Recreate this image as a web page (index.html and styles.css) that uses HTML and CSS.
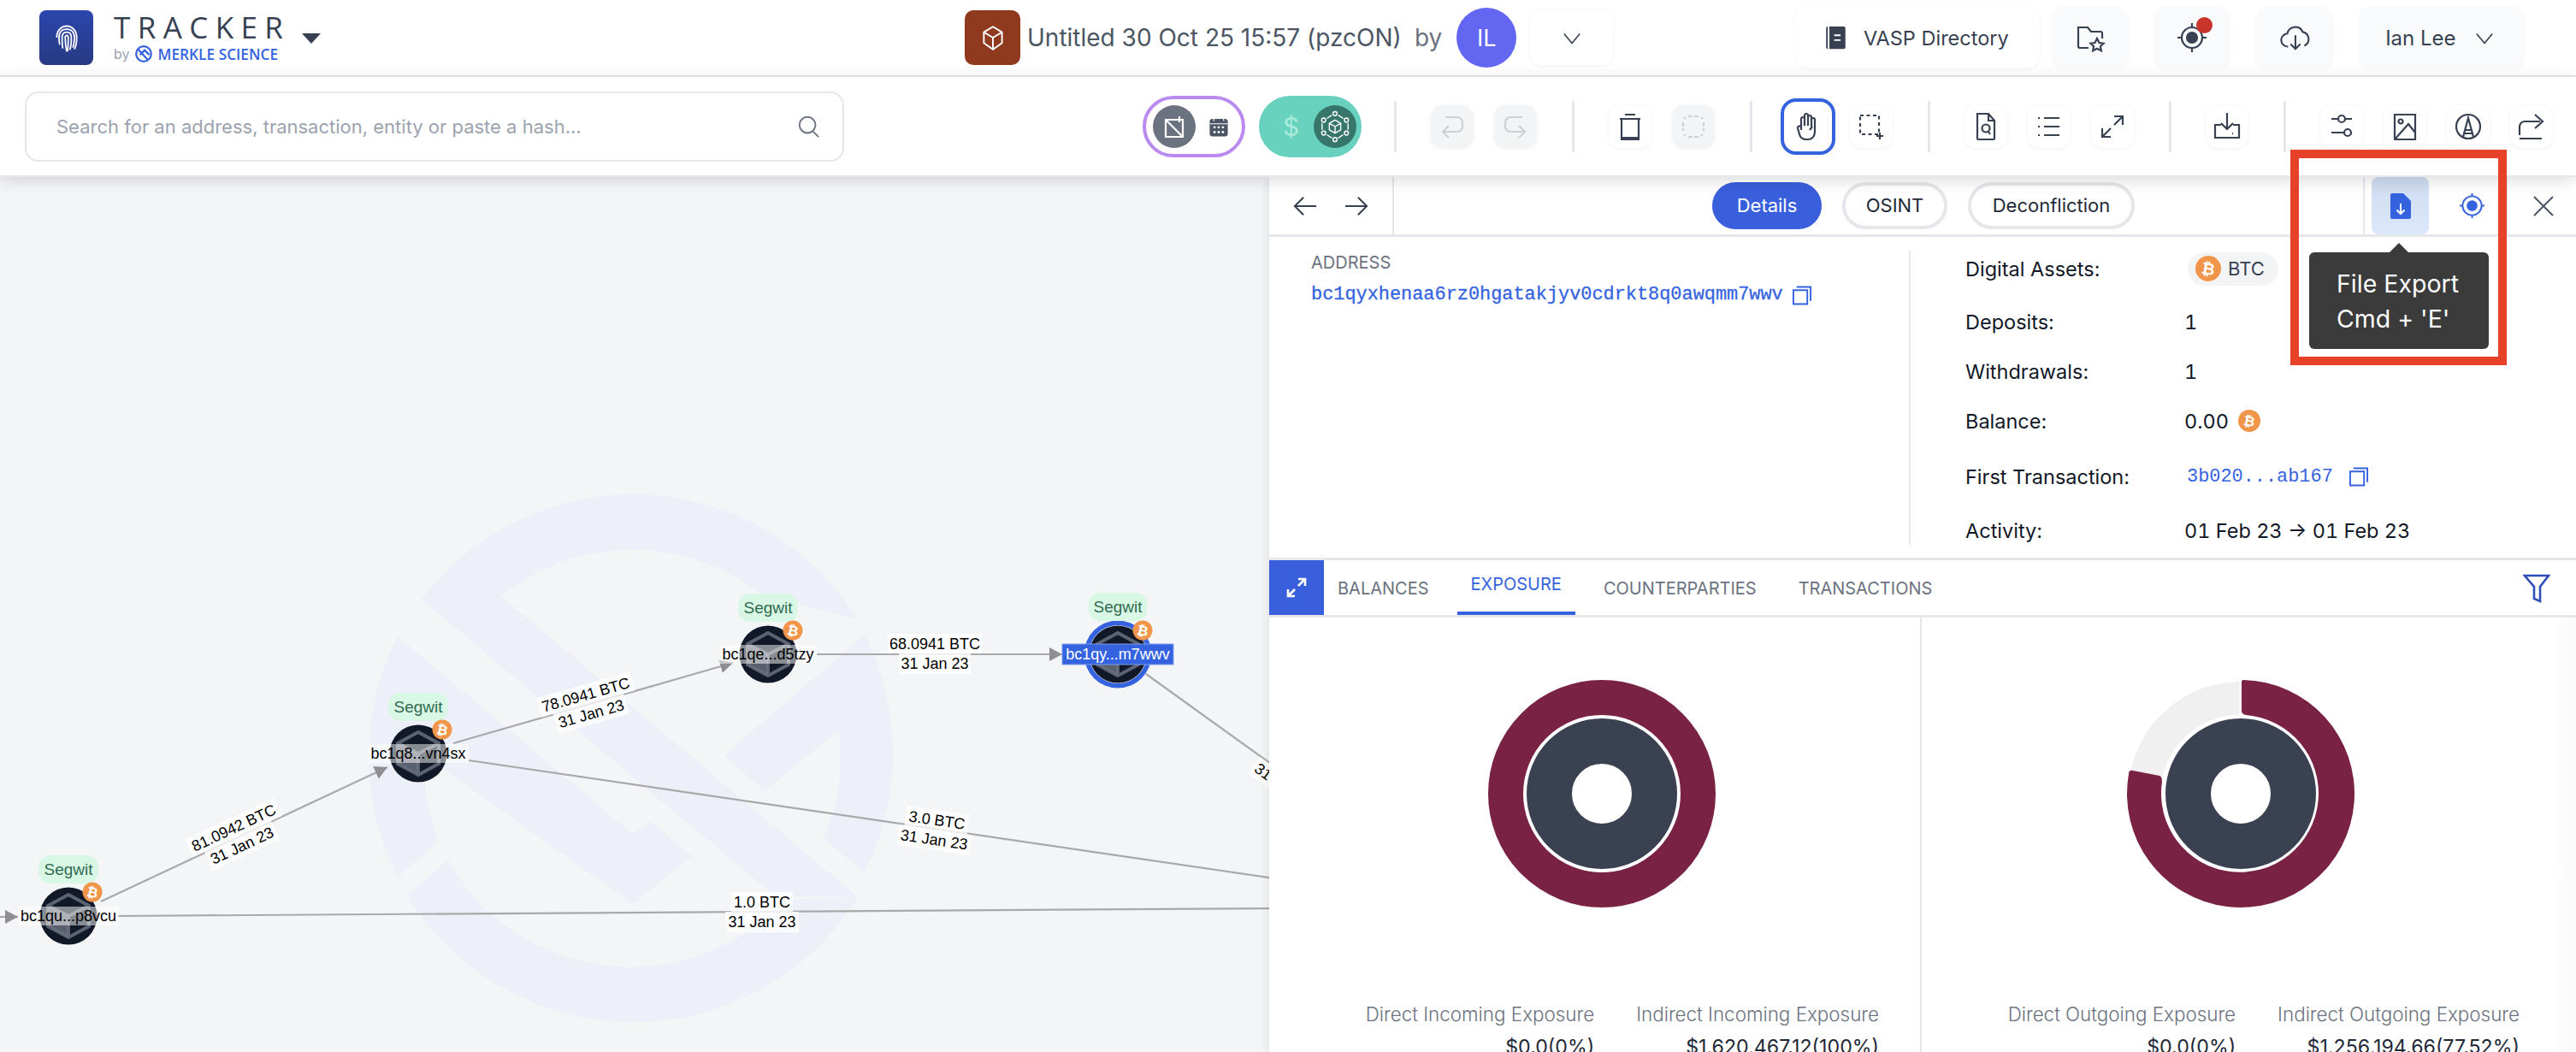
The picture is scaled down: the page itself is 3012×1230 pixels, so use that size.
FILE: index.html
```html
<!DOCTYPE html>
<html lang="en">
<head>
  <meta charset="UTF-8">
  <title>Tracker</title>
  <link rel="stylesheet" href="styles.css">
</head>
<body>

<div class="page">
  <!-- TOP BAR -->
  <header class="topbar">
    <div class="logo">
      <svg viewBox="0 0 40 44" class="logo-print">
        <path d="M7 22C7 13 13 7 20 7s13 6 13 15c0 7-1 11-3 15"/>
        <path d="M11 31c-1-3-1-6-1-9 0-7 4-11 10-11s10 4 10 11c0 5-1 10-2 13"/>
        <path d="M15 36c-1-4-1-9-1-14 0-4 2-7 6-7s6 3 6 7c0 6 0 11-2 16"/>
        <path d="M20 40c-1-5-2-11-2-18 0-2 1-3 2-3s2 1 2 3c0 6 0 12-1 18"/>
      </svg>
    </div>
    <div class="brand">
      <div class="brand-name">TRACKER</div>
      <div class="brand-by">
        <span>by</span>
        <svg viewBox="0 0 20 20" class="brand-mark"><circle cx="10" cy="10" r="8"/><path d="M4 5l10 11M6 11l5-5 5 5"/></svg>
        <b>MERKLE SCIENCE</b>
      </div>
    </div>
    <div class="brand-caret"></div>

    <div class="graph-icon">
      <svg viewBox="0 0 32 32" class="ico ico-white"><path d="M16 4l10 6v12l-10 7-10-7V10zM6 10l10 6 10-6M16 16v13"/></svg>
    </div>
    <div class="graph-title">Untitled 30 Oct 25 15:57 (pzcON)</div>
    <div class="graph-by">by</div>
    <div class="avatar">IL</div>
    <button class="chevron-btn"><svg viewBox="0 0 24 24" class="chev"><path d="M2 7l10 12L22 7"/></svg></button>

    <button class="top-btn vasp-btn">
      <svg viewBox="0 0 24 32" class="vasp-ico"><rect x="0" y="2" width="24" height="28" rx="2"/><path d="M3 2v28" class="vasp-gap"/><path d="M10 13h8M10 19h8" class="vasp-gap"/></svg>
      VASP Directory
    </button>
    <button class="top-btn top-square folder-btn">
      <svg viewBox="0 0 36 36" class="ico ico-top"><path d="M16 30H6a2 2 0 0 1-2-2V6h11l4 5h11a2 2 0 0 1 2 2v6"/><path d="M26 19l2.500 5 5 .7-3.600 3.500.9 5-4.800-2.500-4.800 2.500.9-5-3.600-3.500 5-.7z"/></svg>
    </button>
    <button class="top-btn top-square target-btn">
      <svg viewBox="0 0 36 36" class="ico ico-top"><circle cx="18" cy="18" r="12"/><circle cx="18" cy="18" r="6" class="fill-dark"/><path d="M18 1v5M18 30v5M1 18h5M30 18h5"/></svg>
      <span class="alert-dot"></span>
    </button>
    <button class="top-btn top-square cloud-btn">
      <svg viewBox="0 0 38 36" class="ico ico-top"><path d="M11 29a8 8 0 0 1-1-16 10 10 0 0 1 19-2 9 9 0 0 1 2 17"/><path d="M20 15v17M14 26l6 6 6-6"/></svg>
    </button>
    <button class="top-btn user-btn">Ian Lee <svg viewBox="0 0 24 24" class="chev"><path d="M2 7l10 12L22 7"/></svg></button>
  </header>

  <!-- TOOLBAR -->
  <div class="toolbar">
    <div class="search">
      <span class="search-text">Search for an address, transaction, entity or paste a hash...</span>
      <svg viewBox="0 0 30 30" class="search-ico"><circle cx="13" cy="13" r="10"/><path d="M20 21l7 7"/></svg>
    </div>

    <div class="pill pill-purple">
      <span class="pill-dot pill-dot-gray">
        <svg viewBox="0 0 32 32" class="ico ico-white"><path d="M6 8h20v20H6zM22 4v7M6 8l20 20"/></svg>
      </span>
      <svg viewBox="0 0 32 32" class="pill-cal"><rect x="3" y="5" width="26" height="25" rx="4"/><path d="M9 2v6M23 2v6M3 12h26" class="cal-line"/><g class="cal-dots"><circle cx="10" cy="17" r="1.700"/><circle cx="16" cy="17" r="1.700"/><circle cx="22" cy="17" r="1.700"/><circle cx="10" cy="24" r="1.700"/><circle cx="16" cy="24" r="1.700"/><circle cx="22" cy="24" r="1.700"/></g></svg>
    </div>
    <div class="pill pill-green">
      <span class="pill-dollar">$</span>
      <span class="pill-dot pill-dot-green">
        <svg viewBox="0 0 40 40" class="ico-net"><path d="M20 12l7 4v8l-7 4-7-4v-8zM13 16l7 4 7-4M20 20v8"/><g><circle cx="20" cy="4" r="2.500"/><circle cx="34" cy="12" r="2.500"/><circle cx="34" cy="28" r="2.500"/><circle cx="20" cy="36" r="2.500"/><circle cx="6" cy="28" r="2.500"/><circle cx="6" cy="12" r="2.500"/></g><path d="M24 6l6 4M36 16v8M30 30l-6 4M16 34l-6-4M4 24v-8M10 10l6-4"/></svg>
      </span>
    </div>

    <span class="sep sep-first"></span>
    <div class="tool-group">
      <button class="tool tool-off"><svg viewBox="0 0 32 32" class="ico"><path d="M8 5h14a6 6 0 0 1 6 6v5a6 6 0 0 1-6 6H5M12 15l-7 7 7 7"/></svg></button>
      <button class="tool tool-off"><svg viewBox="0 0 32 32" class="ico"><path d="M24 5H10a6 6 0 0 0-6 6v5a6 6 0 0 0 6 6h17M20 15l7 7-7 7"/></svg></button>
    </div>
    <span class="sep"></span>
    <div class="tool-group">
      <button class="tool"><svg viewBox="0 0 32 36" class="ico ico-tall"><path d="M4 9h24M10 4h12M6 9v24h20V9M6 31h20"/></svg></button>
      <button class="tool tool-off"><svg viewBox="0 0 32 32" class="ico"><path d="M10 4h12M10 28h12M4 11v10M28 11v10M5 7l2-2M25 5l2 2M5 25l2 2M25 27l2-2" stroke-dasharray="5 2"/></svg></button>
    </div>
    <span class="sep"></span>
    <div class="tool-group">
      <button class="tool tool-hand"><svg viewBox="0 0 32 36" class="ico ico-tall"><path d="M8 22V9a2 2 0 0 1 4 0v8-12a2 2 0 0 1 4 0v12V7a2 2 0 0 1 4 0v11-8a2 2 0 0 1 4 0v14c0 5-3 9-8 9h-2c-4 0-7-2-8-6l-2-7a2 2 0 0 1 4-1z"/><path d="M18 22l3-4"/></svg></button>
      <button class="tool"><svg viewBox="0 0 32 36" class="ico ico-tall"><path d="M3 5h22v22H3z" stroke-dasharray="4 3.500"/><path d="M26 25v8M22 29h8"/></svg></button>
    </div>
    <span class="sep"></span>
    <div class="tool-group">
      <button class="tool"><svg viewBox="0 0 32 36" class="ico ico-tall"><path d="M6 3h13l7 8v21a1 1 0 0 1-1 1H7a1 1 0 0 1-1-1zM19 3v8h7"/><circle cx="16" cy="20" r="4.500"/><path d="M19 24l2 3"/></svg></button>
      <button class="tool"><svg viewBox="0 0 32 32" class="ico"><path d="M10 6h18M10 16h18M10 26h18M3 6h2M3 16h2M3 26h2"/></svg></button>
      <button class="tool"><svg viewBox="0 0 32 32" class="ico"><path d="M28 4L18 14M18 4h10v10M4 28l10-10M4 18v10h10"/></svg></button>
    </div>
    <span class="sep"></span>
    <div class="tool-group">
      <button class="tool"><svg viewBox="0 0 32 36" class="ico ico-tall"><path d="M16 2v18M9 14l7 7 7-7M9 16H2v15h28V16h-7M22 26h1"/></svg></button>
    </div>
    <span class="sep"></span>
    <div class="tool-group">
      <button class="tool"><svg viewBox="0 0 32 36" class="ico ico-tall"><path d="M4 9h8M20 9h8M4 25h16M28 25h-2"/><circle cx="16" cy="9" r="4"/><circle cx="23" cy="25" r="4"/></svg></button>
      <button class="tool"><svg viewBox="0 0 32 36" class="ico ico-tall"><path d="M4 4h24v29H4zM4 33l16-18 8 10"/><circle cx="11" cy="12" r="2.500"/></svg></button>
      <button class="tool"><svg viewBox="0 0 32 36" class="ico ico-tall"><circle cx="16" cy="18" r="14"/><path d="M10 30l6-22 6 22M12 22h8M12 26h8"/></svg></button>
      <button class="tool"><svg viewBox="0 0 32 36" class="ico ico-tall"><path d="M2 32h26M2 28V18a6 6 0 0 1 6-6h18M20 4l9 8-9 8"/></svg></button>
    </div>
  </div>

  <div class="workspace">
    <!-- GRAPH CANVAS -->
    <div class="canvas">
      <svg class="graph" viewBox="0 207 1484 1023" width="1484" height="1023">
        <defs>
          <marker id="arrow" markerUnits="userSpaceOnUse" markerWidth="16" markerHeight="16" refX="15" refY="8" orient="auto">
            <path d="M0 0L15 8 0 16z" class="arrow-head"/>
          </marker>
          <g id="cube">
            <path d="M-24 -12L0 -25 24 -12V12L0 25 -24 12z" class="cube-line"/>
            <path d="M-24 -12L0 0 24 -12M0 0V25" class="cube-line"/>
            <path d="M-24 -12L0 0V25L-24 12z" class="cube-face"/>
          </g>
          <g id="coin">
            <circle r="11.500" class="coin"/>
            <text y="6" class="coin-text" transform="rotate(12)">₿</text>
          </g>
          <circle id="disc" r="33.500" class="disc"/>
        </defs>

        <!-- watermark -->
        <g class="watermark">
          <path d="M493 701A309.500 309.500 0 0 1 1003 724L893 697A244 244 0 0 0 586 697L1003 1049 905 1047 493 701z"/>
          <path d="M465 744A309.500 309.500 0 0 0 465 1026L513 983A245 245 0 0 1 496 883L740 1057 810 1001 760 960 740 975z"/>
          <path d="M1011 742A309.500 309.500 0 0 1 1011 1020L963 981A245 245 0 0 0 981 854L894 925 847 883z"/>
          <path d="M476 1047L524 1006A245 245 0 0 0 917 1052L1003 1049A309.500 309.500 0 0 1 476 1047z"/>
        </g>

        <!-- edges -->
        <g class="edges">
          <path d="M0 1072L21 1072" marker-end="url(#arrow)"/>
          <path d="M118 1054L453 897" marker-end="url(#arrow)"/>
          <path d="M530 869L857 775" marker-end="url(#arrow)"/>
          <path d="M955 765L1242 765" marker-end="url(#arrow)"/>
          <path d="M1340 788L1490 896"/>
          <path d="M548 889L1490 1027"/>
          <path d="M138 1071L1490 1062"/>
        </g>

        <!-- edge labels -->
        <g transform="translate(278 978) rotate(-25)" class="edge-label">
          <rect x="-57" y="-23" width="114" height="23"/><text y="-5">81.0942 BTC</text>
          <rect x="-43" y="0" width="86" height="24"/><text y="18">31 Jan 23</text>
        </g>
        <g transform="translate(688 823) rotate(-16)" class="edge-label">
          <rect x="-57" y="-23" width="114" height="23"/><text y="-5">78.0941 BTC</text>
          <rect x="-43" y="0" width="86" height="24"/><text y="18">31 Jan 23</text>
        </g>
        <g transform="translate(1093 764)" class="edge-label">
          <rect x="-55" y="-23" width="110" height="23"/><text y="-5">68.0941 BTC</text>
          <rect x="-42" y="0" width="84" height="24"/><text y="18">31 Jan 23</text>
        </g>
        <g transform="translate(1094 970) rotate(8.300)" class="edge-label">
          <rect x="-37" y="-23" width="74" height="23"/><text y="-5">3.0 BTC</text>
          <rect x="-43" y="0" width="86" height="24"/><text y="18">31 Jan 23</text>
        </g>
        <g transform="translate(891 1066)" class="edge-label">
          <rect x="-36" y="-23" width="72" height="23"/><text y="-5">1.0 BTC</text>
          <rect x="-43" y="0" width="86" height="24"/><text y="18">31 Jan 23</text>
        </g>
        <g transform="translate(1508 910) rotate(36)" class="edge-label">
          <rect x="-43" y="0" width="86" height="24"/><text y="18">31 Jan 23</text>
        </g>

        <!-- nodes -->
        <g transform="translate(80 1071)">
          <use href="#disc"/><use href="#cube"/>
          <rect x="-59" y="-11" width="118" height="22" class="node-tag"/>
          <text y="6" class="node-text">bc1qu...p8vcu</text>
          <rect x="-35" y="-71" width="70" height="33" rx="14" class="chip"/>
          <text y="-48" class="chip-text">Segwit</text>
          <use href="#coin" x="28" y="-28"/>
        </g>
        <g transform="translate(489 881)">
          <use href="#disc"/><use href="#cube"/>
          <rect x="-59" y="-11" width="118" height="22" class="node-tag"/>
          <text y="6" class="node-text">bc1q8...vn4sx</text>
          <rect x="-35" y="-71" width="70" height="33" rx="14" class="chip"/>
          <text y="-48" class="chip-text">Segwit</text>
          <use href="#coin" x="28" y="-28"/>
        </g>
        <g transform="translate(898 765)">
          <use href="#disc"/><use href="#cube"/>
          <rect x="-57" y="-11" width="114" height="22" class="node-tag"/>
          <text y="6" class="node-text">bc1qe...d5tzy</text>
          <rect x="-35" y="-71" width="70" height="33" rx="14" class="chip"/>
          <text y="-48" class="chip-text">Segwit</text>
          <use href="#coin" x="29" y="-28"/>
        </g>
        <g transform="translate(1307 765)">
          <circle r="39.500" class="disc-ring"/>
          <circle r="34" class="disc-gap"/>
          <use href="#disc"/><use href="#cube"/>
          <rect x="-65" y="-12" width="130" height="24" class="node-tag-on"/>
          <text y="6" class="node-text-on">bc1qy...m7wwv</text>
          <rect x="-34.500" y="-72" width="69" height="33" rx="14" class="chip"/>
          <text y="-49" class="chip-text">Segwit</text>
          <use href="#coin" x="29" y="-28"/>
        </g>
      </svg>
    </div>

    <!-- SIDE PANEL -->
    <div class="panel">
      <div class="panel-head">
        <div class="panel-nav">
          <svg viewBox="0 0 30 26" class="ico nav-arrow"><path d="M29 13H2M13 2L2 13l11 11"/></svg>
          <svg viewBox="0 0 30 26" class="ico nav-arrow"><path d="M1 13h27M17 2l11 11-11 11"/></svg>
        </div>
        <div class="panel-tabs">
          <span class="tab-pill tab-pill-on">Details</span>
          <span class="tab-pill tab-pill-osint">OSINT</span>
          <span class="tab-pill tab-pill-decon">Deconfliction</span>
        </div>
        <div class="panel-actions">
          <span class="action action-on">
            <svg viewBox="0 0 26 32" class="action-file"><path d="M3 1h13l9 9v19a2 2 0 0 1-2 2H3a2 2 0 0 1-2-2V3a2 2 0 0 1 2-2z"/><path d="M13 13v12M8.500 20.500L13 25l4.500-4.500" class="file-arrow"/></svg>
          </span>
          <span class="action">
            <svg viewBox="0 0 32 32" class="action-target"><circle cx="16" cy="16" r="11.500"/><circle cx="16" cy="16" r="5.500" class="action-target-dot"/><path d="M16 1v4M16 27v4M1 16h4M27 16h4"/></svg>
          </span>
        </div>
        <div class="panel-close">
          <svg viewBox="0 0 24 24" class="close-x"><path d="M1 1l22 22M23 1L1 23"/></svg>
        </div>
      </div>

      <div class="details">
        <div class="details-left">
          <div class="field-label">ADDRESS</div>
          <div class="address">
            <span class="mono">bc1qyxhenaa6rz0hgatakjyv0cdrkt8q0awqmm7wwv</span>
            <svg viewBox="0 0 24 24" class="copy"><path d="M2 6h17v17H2zM6 2h17v17"/></svg>
          </div>
        </div>
        <div class="details-right">
          <div class="fact"><span class="fact-key">Digital Assets:</span>
            <span class="asset-chip"><span class="btc-coin">₿</span>BTC</span></div>
          <div class="fact"><span class="fact-key">Deposits:</span><span>1</span></div>
          <div class="fact"><span class="fact-key">Withdrawals:</span><span>1</span></div>
          <div class="fact"><span class="fact-key">Balance:</span><span>0.00</span><span class="btc-coin btc-coin-small">₿</span></div>
          <div class="fact"><span class="fact-key">First Transaction:</span>
            <span class="mono hash">3b020...ab167</span>
            <svg viewBox="0 0 24 24" class="copy"><path d="M2 6h17v17H2zM6 2h17v17"/></svg></div>
          <div class="fact"><span class="fact-key">Activity:</span><span>01 Feb 23 → 01 Feb 23</span></div>
        </div>
      </div>

      <div class="tabs">
        <span class="expand"><svg viewBox="0 0 24 24" class="expand-ico"><path d="M22 2L14 10M14 2h8v8M2 22l8-8M2 14v8h8"/></svg></span>
        <span class="tab">BALANCES</span>
        <span class="tab tab-on">EXPOSURE</span>
        <span class="tab">COUNTERPARTIES</span>
        <span class="tab">TRANSACTIONS</span>
        <svg viewBox="0 0 32 34" class="filter"><path d="M2 2h28L20 15v17l-7-3V15z"/></svg>
      </div>

      <div class="charts">
        <section class="chart chart-in">
          <svg viewBox="-133 -133 266 266" class="donut">
            <circle r="112.500" class="ring-full"/>
            <circle r="61.500" class="ring-core"/>
          </svg>
          <div class="legend">
            <div class="legend-col"><div class="legend-name">Direct Incoming Exposure</div><div class="legend-val">$0.0(0%)</div></div>
            <div class="legend-col"><div class="legend-name">Indirect Incoming Exposure</div><div class="legend-val">$1,620,467.12(100%)</div></div>
          </div>
        </section>
        <section class="chart chart-out">
          <svg viewBox="-133 -133 266 266" class="donut">
            <path d="M-1.500 -131A131 131 0 0 0 -129 -24L-92 -17A92 92 0 0 1 -1.500 -92z" class="ring-rest"/>
            <path d="M3 -133A133 133 0 1 1 -131 -23Q-131 -28 -126 -27L-95 -21Q-92 -20 -92 -14A92 92 0 1 0 6 -92Q1 -93 1 -97V-130Q1 -133 3 -133z" class="ring-part"/>
            <circle r="61.500" class="ring-core"/>
          </svg>
          <div class="legend">
            <div class="legend-col"><div class="legend-name">Direct Outgoing Exposure</div><div class="legend-val">$0.0(0%)</div></div>
            <div class="legend-col"><div class="legend-name">Indirect Outgoing Exposure</div><div class="legend-val">$1,256,194.66(77.52%)</div></div>
          </div>
        </section>
      </div>
    </div>
  </div>

  <!-- annotation over the panel -->
  <div class="tooltip">File Export<br>Cmd + 'E'</div>
  <div class="highlight"></div>
</div>

</body>
</html>
```

FILE: styles.css
```css
* {
  box-sizing: border-box;
}

body {
  margin: 0;
  font-family: Inter, "Noto Sans", sans-serif;
  color: #111827;
  background: #ffffff;
}

button {
  font-family: inherit;
  border: none;
  padding: 0;
}

.page {
  position: relative;
  width: 3012px;
  height: 1230px;
  overflow: hidden;
  display: flex;
  flex-direction: column;
}

.ico {
  fill: none;
  stroke: #374151;
  stroke-width: 2.2;
  width: 32px;
  height: 32px;
}

.ico-tall {
  height: 36px;
}

.ico-white {
  stroke: #ffffff;
}

/* top bar */
.topbar {
  height: 90px;
  flex: none;
  display: flex;
  align-items: center;
  padding-left: 46px;
  border-bottom: 2px solid #e5e7eb;
}

.logo {
  width: 63px;
  height: 64px;
  border-radius: 8px;
  background: linear-gradient(180deg, #2b46ad, #283a82);
  display: flex;
  align-items: center;
  justify-content: center;
}

.logo-print {
  width: 36px;
  height: 40px;
  fill: none;
  stroke: #ffffff;
  stroke-width: 2;
}

.brand {
  margin-left: 24px;
  width: 196px;
}

.brand-name {
  font-family: "Open Sans", sans-serif;
  font-size: 35px;
  line-height: 38px;
  letter-spacing: 8.400px;
  color: #374151;
}

.brand-by {
  display: flex;
  align-items: center;
  height: 24px;
  font-size: 16px;
  color: #9ca3af;
}

.brand-by b {
  color: #3563e0;
  font-family: "Open Sans", sans-serif;
  font-size: 17.300px;
  font-weight: 600;
  white-space: nowrap;
}

.brand-mark {
  width: 22px;
  height: 22px;
  margin: 0 5px 0 6px;
  fill: none;
  stroke: #3563e0;
  stroke-width: 2;
}

.brand-caret {
  width: 0;
  height: 0;
  margin: 2px 0 0 24px;
  border-left: 11px solid transparent;
  border-right: 11px solid transparent;
  border-top: 12px solid #374151;
}

.graph-icon {
  margin-left: 753px;
  width: 65px;
  height: 64px;
  border-radius: 10px;
  background: #8f3a1e;
  display: flex;
  align-items: center;
  justify-content: center;
}

.graph-icon .ico {
  width: 34px;
  height: 34px;
  stroke-width: 1.800;
}

.graph-title {
  margin-left: 8px;
  font-size: 28px;
  color: #4b5563;
  white-space: nowrap;
  width: 435px;
}

.graph-by {
  margin-left: 18px;
  font-size: 28px;
  color: #6b7280;
}

.avatar {
  margin-left: 17px;
  width: 70px;
  height: 70px;
  border-radius: 50%;
  background: #6366f1;
  color: #ffffff;
  font-size: 27px;
  display: flex;
  align-items: center;
  justify-content: center;
}

.chevron-btn {
  margin-left: 16px;
  width: 97px;
  height: 64px;
  border-radius: 12px;
  background: #ffffff;
  box-shadow: 0 1px 5px rgba(0, 0, 0, 0.06);
  display: flex;
  align-items: center;
  justify-content: center;
}

.chev {
  width: 22px;
  height: 22px;
  fill: none;
  stroke: #374151;
  stroke-width: 1.800;
}

.top-btn {
  height: 72px;
  border-radius: 14px;
  background: #f9fafb;
  box-shadow: 0 1px 5px rgba(0, 0, 0, 0.05);
  display: flex;
  align-items: center;
  justify-content: center;
  position: relative;
  font-size: 24px;
  color: #374151;
}

.vasp-btn {
  margin-left: 213px;
  width: 285px;
  background: #ffffff;
  gap: 21px;
  font-size: 23.500px;
}

.vasp-ico {
  width: 23px;
  height: 30px;
  fill: #374151;
}

.vasp-gap {
  fill: none;
  stroke: #ffffff;
  stroke-width: 2;
}

.top-square {
  width: 88px;
}

.folder-btn {
  margin-left: 16px;
}

.target-btn {
  margin-left: 31px;
}

.cloud-btn {
  margin-left: 32px;
}

.ico-top {
  width: 36px;
  height: 36px;
  stroke-width: 2.200;
}

.fill-dark {
  fill: #374151;
}

.alert-dot {
  position: absolute;
  top: 12px;
  right: 20px;
  width: 19px;
  height: 19px;
  border-radius: 50%;
  background: #c9352c;
}

.user-btn {
  margin-left: 32px;
  width: 192px;
  gap: 22px;
  padding-right: 6px;
}

/* toolbar */
.toolbar {
  height: 117px;
  flex: none;
  position: relative;
  z-index: 2;
  display: flex;
  align-items: center;
  padding-left: 29px;
  background: #ffffff;
  border-bottom: 2px solid #e5e7eb;
  box-shadow: 0 4px 18px rgba(0, 0, 0, 0.14);
}

.search {
  width: 958px;
  height: 82px;
  flex: none;
  border: 2px solid #e5e7eb;
  border-radius: 16px;
  display: flex;
  align-items: center;
  justify-content: space-between;
  padding: 0 25px 0 35px;
}

.search-text {
  font-size: 22px;
  color: #9ca3af;
}

.search-ico {
  width: 28px;
  height: 30px;
  fill: none;
  stroke: #6b7280;
  stroke-width: 2;
}

.pill {
  width: 120px;
  height: 72px;
  flex: none;
  border-radius: 36px;
  display: flex;
  align-items: center;
}

.pill-purple {
  margin-left: 349px;
  border: 4px solid #b98af0;
  padding-left: 8px;
  gap: 14px;
}

.pill-green {
  margin-left: 16px;
  background: #69d2bf;
  padding-left: 28px;
  gap: 21px;
}

.pill-dot {
  width: 50px;
  height: 50px;
  border-radius: 50%;
  display: flex;
  align-items: center;
  justify-content: center;
}

.pill-dot-gray {
  background: #6b7280;
}

.pill-dot-green {
  background: #36766b;
}

.pill-cal {
  width: 26px;
  height: 28px;
  fill: #4b5563;
}

.cal-line {
  fill: none;
  stroke: #ffffff;
  stroke-width: 1.500;
}

.cal-dots {
  fill: #ffffff;
}

.pill-dollar {
  width: 15px;
  font-size: 30px;
  color: #a8ecdc;
}

.ico-net {
  width: 38px;
  height: 38px;
  fill: none;
  stroke: #ffffff;
  stroke-width: 1.500;
}

.sep {
  width: 3px;
  height: 60px;
  flex: none;
  margin: 0 40px 0 41px;
  background: #e5e7eb;
}

.sep-first {
  margin-left: 38px;
}

.tool-group {
  display: flex;
  align-items: center;
  gap: 24px;
}

.tool {
  width: 50px;
  height: 50px;
  flex: none;
  border-radius: 14px;
  background: #ffffff;
  box-shadow: 0 1px 5px rgba(0, 0, 0, 0.06);
  display: flex;
  align-items: center;
  justify-content: center;
}

.tool-off {
  background: #f3f4f6;
}

.tool-off .ico {
  stroke: #cdd0d6;
}

.tool-hand {
  width: 64px;
  height: 66px;
  margin: 0 -7px;
  border: 4px solid #3563e0;
  border-radius: 18px;
}

/* main area */
.workspace {
  flex: 1;
  display: flex;
  min-height: 0;
}

.canvas {
  width: 1484px;
  flex: none;
  overflow: hidden;
  background: #f4f5f7;
}

.graph {
  display: block;
  font-family: "Liberation Sans", Arial, sans-serif;
}

.watermark {
  fill: #edf0f8;
}

.edges path {
  fill: none;
  stroke: #a9a9ab;
  stroke-width: 2.200;
}

.arrow-head {
  fill: #8e8e93;
}

.edge-label {
  font-size: 18px;
  text-anchor: middle;
  fill: #000000;
}

.edge-label rect {
  fill: #ffffff;
  fill-opacity: 0.8;
}

.disc {
  fill: #111827;
}

.disc-ring {
  fill: #3563e0;
}

.disc-gap {
  fill: #ffffff;
}

.cube-line {
  fill: none;
  stroke: #5b6271;
  stroke-width: 4;
}

.cube-face {
  fill: #6b7280;
  fill-opacity: 0.8;
}

.coin {
  fill: #f0954a;
}

.coin-text {
  font-family: "DejaVu Sans", sans-serif;
  font-weight: bold;
  font-size: 16px;
  fill: #ffffff;
  text-anchor: middle;
}

.node-tag {
  fill: #ffffff;
  fill-opacity: 0.5;
}

.node-text {
  font-size: 18px;
  text-anchor: middle;
  fill: #000000;
}

.node-tag-on {
  fill: #3563e0;
  stroke: #7f9df0;
  stroke-width: 1;
}

.node-text-on {
  font-size: 18px;
  text-anchor: middle;
  fill: #ffffff;
}

.chip {
  fill: #d9f7e5;
}

.chip-text {
  font-size: 19px;
  text-anchor: middle;
  fill: #2f6b50;
}

/* side panel */
.panel {
  flex: 1;
  display: flex;
  flex-direction: column;
  background: #ffffff;
  min-width: 0;
  box-shadow: -4px 0 8px rgba(0, 0, 0, 0.06);
}

.panel-head {
  height: 70px;
  flex: none;
  display: flex;
  border-bottom: 3px solid #e5e7eb;
}

.panel-nav {
  width: 146px;
  flex: none;
  border-right: 2px solid #e5e7eb;
  display: flex;
  align-items: center;
  padding-left: 28px;
  gap: 32px;
}

.nav-arrow {
  width: 28px;
  height: 26px;
  stroke-width: 2.200;
}

.panel-tabs {
  margin-left: 372px;
  width: 761px;
  flex: none;
  display: flex;
  align-items: center;
  gap: 24px;
  padding-bottom: 1px;
}

.tab-pill {
  height: 55px;
  width: 128px;
  border: 4px solid #e5e7eb;
  border-radius: 28px;
  display: flex;
  align-items: center;
  justify-content: center;
  font-size: 22px;
  color: #1f2937;
}

.tab-pill-on {
  background: #3a5fdc;
  border-color: #3a5fdc;
  color: #ffffff;
}

.tab-pill-osint {
  width: 123px;
}

.tab-pill-decon {
  width: 195px;
}

.panel-actions {
  width: 169px;
  flex: none;
  display: flex;
  border-left: 2px solid #e5e7eb;
  border-right: 2px solid #e5e7eb;
  padding-left: 8px;
}

.action {
  width: 67px;
  height: 67px;
  border-radius: 8px;
  display: flex;
  align-items: center;
  justify-content: center;
}

.action-on {
  background: linear-gradient(180deg, #cfdcf1, #dbe7fb);
}

.action + .action {
  margin-left: 17px;
}

.action-file {
  width: 26px;
  height: 32px;
  fill: #3563e0;
}

.file-arrow {
  fill: none;
  stroke: #ffffff;
  stroke-width: 2;
}

.action-target {
  width: 31px;
  height: 31px;
  fill: none;
  stroke: #3563e0;
  stroke-width: 2;
}

.action-target-dot {
  fill: #3563e0;
}

.panel-close {
  flex: 1;
  display: flex;
  align-items: center;
  justify-content: center;
  padding-left: 4px;
}

.close-x {
  width: 24px;
  height: 24px;
  fill: none;
  stroke: #4b5563;
  stroke-width: 2;
}

.details {
  height: 378px;
  flex: none;
  display: flex;
  border-bottom: 3px solid #e5e7eb;
  padding-top: 16px;
}

.details-left {
  width: 750px;
  height: 344px;
  flex: none;
  border-right: 2px solid #e5e7eb;
  padding-left: 49px;
}

.field-label {
  font-size: 20px;
  line-height: 28px;
  color: #6b7280;
}

.address {
  margin-top: 11px;
  display: flex;
  align-items: center;
  gap: 10px;
}

.mono {
  font-family: "Liberation Mono", "DejaVu Sans Mono", monospace;
  color: #3563e0;
  font-size: 21.900px;
  -webkit-text-stroke: 0.3px #3563e0;
  white-space: nowrap;
}

.hash {
  margin-left: 3px;
  -webkit-text-stroke: 0;
}

.copy {
  width: 23px;
  height: 24px;
  fill: none;
  stroke: #3563e0;
  stroke-width: 2;
}

.details-right {
  padding-left: 64px;
  font-size: 23.500px;
  font-variant-numeric: tabular-nums;
  color: #111827;
}

.fact {
  height: 40px;
  display: flex;
  align-items: center;
  margin-top: 18px;
}

.fact:nth-child(1) {
  margin-top: 1px;
}

.fact:nth-child(2) {
  margin-top: 22px;
}

.fact:nth-child(5) {
  margin-top: 25px;
}

.fact:nth-child(6) {
  margin-top: 23px;
}

.fact-key {
  width: 256px;
  flex: none;
  font-variant-numeric: normal;
}

.asset-chip {
  margin-left: 4px;
  height: 39px;
  width: 106px;
  border-radius: 20px;
  background: #f3f4f6;
  display: flex;
  align-items: center;
  gap: 8px;
  padding-left: 9px;
  font-size: 22px;
  color: #374151;
}

.btc-coin {
  width: 30px;
  height: 30px;
  border-radius: 50%;
  background: #f0954a;
  color: #ffffff;
  font-family: "DejaVu Sans", sans-serif;
  font-weight: bold;
  font-size: 19px;
  display: flex;
  align-items: center;
  justify-content: center;
  transform: rotate(10deg);
}

.btc-coin-small {
  width: 26px;
  height: 26px;
  margin-left: 11px;
  font-size: 16px;
}

.fact .copy {
  margin-left: 18px;
}

/* lower tabs */
.tabs {
  height: 67px;
  flex: none;
  display: flex;
  align-items: stretch;
  border-bottom: 3px solid #e5e7eb;
  position: relative;
}

.expand {
  width: 64px;
  flex: none;
  background: #3a5fdc;
  display: flex;
  align-items: center;
  justify-content: center;
}

.expand-ico {
  width: 24px;
  height: 24px;
  fill: none;
  stroke: #ffffff;
  stroke-width: 2.600;
}

.tab {
  display: flex;
  align-items: center;
  padding: 2px 16px 0;
  font-size: 20px;
  color: #6b7280;
  margin-right: 17px;
}

.tab-on {
  color: #3563e0;
  border-bottom: 4px solid #3563e0;
  padding: 0 16px 4px;
}

.filter {
  position: absolute;
  right: 30px;
  top: 16px;
  width: 32px;
  height: 34px;
  fill: none;
  stroke: #2f4db8;
  stroke-width: 2.600;
}

/* charts */
.charts {
  flex: 1;
  display: flex;
  min-height: 0;
  background: linear-gradient(90deg, #ffffff, #f8f8f8) right / 24px 100% no-repeat;
}

.chart {
  width: 763px;
  flex: none;
  position: relative;
  display: flex;
  flex-direction: column;
  padding-top: 73px;
}

.chart-in {
  border-right: 2px solid #e5e7eb;
}

.donut {
  width: 266px;
  height: 266px;
  flex: none;
  display: block;
}

.chart-in .donut {
  margin-left: 256px;
}

.chart-out .donut {
  margin-left: 240px;
}

.ring-full {
  fill: none;
  stroke: #7a2244;
  stroke-width: 41;
}

.ring-rest {
  fill: #f0f0f0;
}

.ring-part {
  fill: #7a2244;
}

.ring-core {
  fill: none;
  stroke: #3a4151;
  stroke-width: 53;
}

.legend {
  margin-top: 109px;
  display: flex;
  justify-content: flex-end;
  gap: 49px;
  padding-right: 48px;
}

.chart-out .legend {
  padding-right: 64px;
}

.legend-col {
  text-align: right;
  white-space: nowrap;
}

.legend-name {
  font-size: 22.400px;
  font-weight: 300;
  line-height: 32px;
  color: #6b7280;
}

.legend-val {
  margin-top: 5px;
  font-size: 23.200px;
  line-height: 34px;
  color: #1f2937;
}

/* annotation */
.tooltip {
  position: absolute;
  left: 2700px;
  top: 295px;
  width: 210px;
  height: 113px;
  padding: 16px 0 0 32px;
  border-radius: 6px;
  background: #3b3b3b;
  color: #ffffff;
  font-size: 28.500px;
  line-height: 41px;
  z-index: 3;
}

.tooltip::before {
  content: "";
  position: absolute;
  left: 94px;
  top: -11px;
  border-left: 11px solid transparent;
  border-right: 11px solid transparent;
  border-bottom: 11px solid #3b3b3b;
}

.highlight {
  position: absolute;
  left: 2678px;
  top: 175px;
  width: 253px;
  height: 252px;
  border: 10px solid #e8412a;
  z-index: 4;
}
```
